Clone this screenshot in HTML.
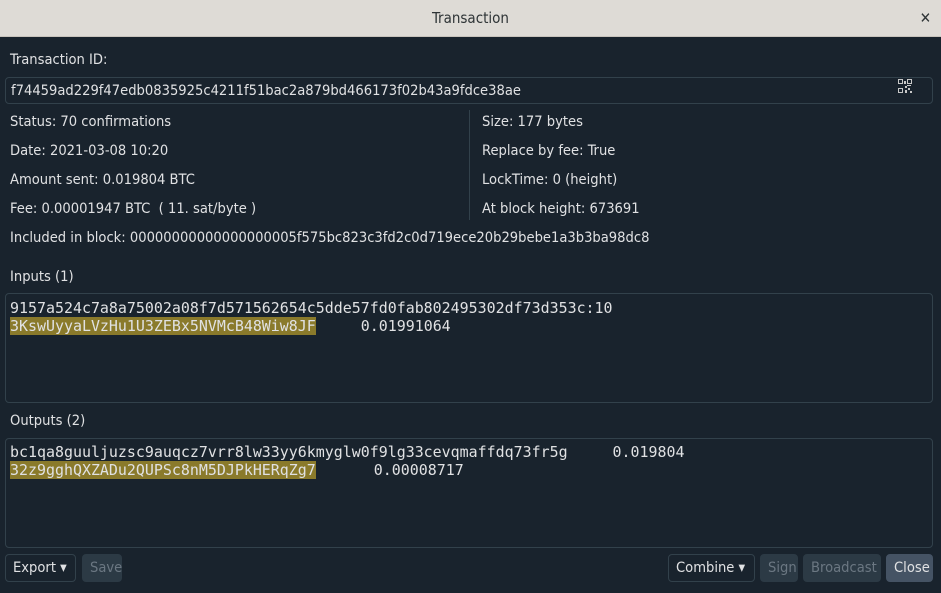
<!DOCTYPE html>
<html><head><style>
*{margin:0;padding:0;box-sizing:border-box}
body{width:941px;height:593px;background:#19232d;font-family:"DejaVu Sans Condensed","Liberation Sans",sans-serif;font-size:14.6px;color:#e0e1e3;position:relative;overflow:hidden}
.title{position:absolute;left:0;top:0;width:941px;height:37px;background:#dedbd6;border-bottom:1px solid #c8c3bc;color:#2e3436;text-align:center;line-height:37px;font-size:15px}
.x{position:absolute;right:10px;top:0;font-size:15px;font-weight:bold}
.t{position:absolute;white-space:nowrap}
.box{position:absolute;border:1px solid #32414b;border-radius:4px;background:#19232d}
.mono{font-family:"DejaVu Sans Mono","Liberation Mono",monospace;font-size:14.95px;white-space:pre;line-height:18px}
.hl{background:#8a7a2b}
.btn{position:absolute;top:554px;height:28px;border:1px solid #32414b;border-radius:4px;line-height:26px;padding:0 7px;font-size:14.6px}
.dis{background:#2c3a45;color:#6b7782;border-color:#2c3a45}
</style></head><body>
<div class="title">Transaction<span class="x">✕</span></div>
<div class="t" style="left:10px;top:51px">Transaction ID:</div>
<div class="box" style="left:5px;top:77px;width:928px;height:27px"></div>
<div class="t" style="left:11px;top:82px">f74459ad229f47edb0835925c4211f51bac2a879bd466173f02b43a9fdce38ae</div>
<svg style="position:absolute;left:898px;top:79px" width="14" height="14" viewBox="0 0 14 14" fill="#c8c8c8"><rect x="0.5" y="0.5" width="4" height="4" fill="none" stroke="#c8c8c8"/><rect x="9.5" y="0.5" width="4" height="4" fill="none" stroke="#c8c8c8"/><rect x="0.5" y="9.5" width="4" height="4" fill="none" stroke="#c8c8c8"/><rect x="7" y="7" width="2" height="2"/><rect x="10" y="9" width="2" height="2"/><rect x="12" y="12" width="2" height="2"/><rect x="7" y="11" width="2" height="3"/><rect x="6" y="2" width="2" height="3"/><rect x="9" y="6" width="4" height="1"/></svg>
<div class="t" style="left:10px;top:113px">Status: 70 confirmations</div>
<div class="t" style="left:10px;top:142px">Date: 2021-03-08 10:20</div>
<div class="t" style="left:10px;top:171px">Amount sent: 0.019804 BTC</div>
<div class="t" style="left:10px;top:200px">Fee: 0.00001947 BTC&nbsp; ( 11. sat/byte )</div>
<div style="position:absolute;left:469px;top:110px;width:1px;height:110px;background:#32414b"></div>
<div class="t" style="left:482px;top:113px">Size: 177 bytes</div>
<div class="t" style="left:482px;top:142px">Replace by fee: True</div>
<div class="t" style="left:482px;top:171px">LockTime: 0 (height)</div>
<div class="t" style="left:482px;top:200px">At block height: 673691</div>
<div class="t" style="left:10px;top:229px">Included in block: 00000000000000000005f575bc823c3fd2c0d719ece20b29bebe1a3b3ba98dc8</div>
<div class="t" style="left:10px;top:268px">Inputs (1)</div>
<div class="box" style="left:5px;top:293px;width:928px;height:110px"></div>
<div class="t mono" style="left:10px;top:299px">9157a524c7a8a75002a08f7d571562654c5dde57fd0fab802495302df73d353c:10
<span class="hl">3KswUyyaLVzHu1U3ZEBx5NVMcB48Wiw8JF</span>     0.01991064</div>
<div class="t" style="left:10px;top:412px">Outputs (2)</div>
<div class="box" style="left:5px;top:438px;width:928px;height:110px"></div>
<div class="t mono" style="left:10px;top:443px">bc1qa8guuljuzsc9auqcz7vrr8lw33yy6kmyglw0f9lg33cevqmaffdq73fr5g     0.019804
<span class="hl">32z9gghQXZADu2QUPSc8nM5DJPkHERqZg7</span>      <span style="margin-left:4px">0.00008717</span></div>
<div class="btn" style="left:5px;width:71px">Export ▾</div>
<div class="btn dis" style="left:82px;width:40px">Save</div>
<div class="btn" style="left:668px;width:87px">Combine ▾</div>
<div class="btn dis" style="left:760px;width:38px">Sign</div>
<div class="btn dis" style="left:803px;width:78px">Broadcast</div>
<div class="btn" style="left:886px;width:47px;background:#455364;border-color:#455364">Close</div>
</body></html>
